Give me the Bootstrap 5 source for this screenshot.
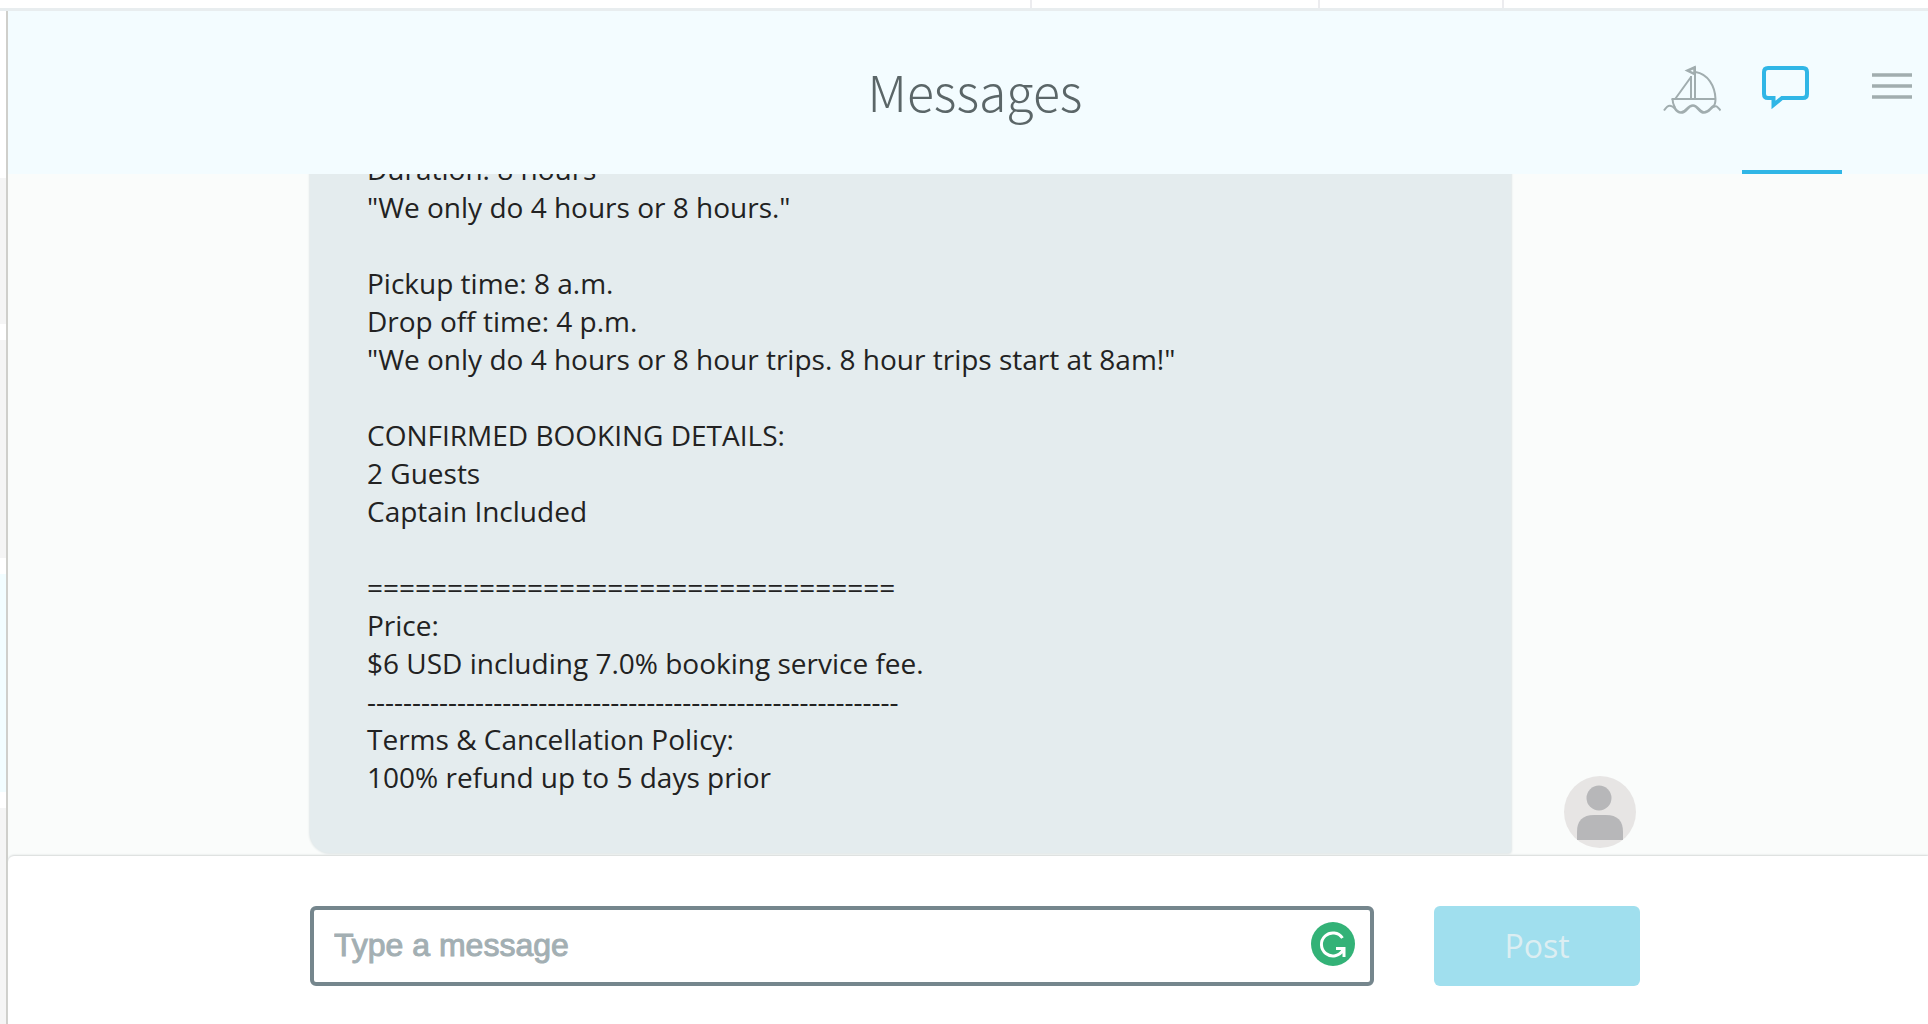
<!DOCTYPE html>
<html lang="en">
<head>
<meta charset="utf-8">
<meta name="viewport" content="width=device-width, initial-scale=1">
<title>Messages</title>
<link href="https://cdn.jsdelivr.net/npm/bootstrap@5.3.0/dist/css/bootstrap.min.css" rel="stylesheet">
<style>
  body { font-family: "Open Sans", "Noto Sans", sans-serif; color: #222; background: #fff; }

  /* strip of the page behind the panel */
  .top-strip { height: 11px; border-bottom: 3px solid #e8edef; padding-right: 424px; }
  .strip-cell { border-left: 2px solid #ececef; }
  .strip-cell.wide { width: 288px; }
  .strip-cell.mid { width: 184px; }
  .strip-cell.end { width: 2px; }

  .rail { width: 6px; padding-top: 167px; gap: 16px; }
  .rail-item { height: 218px; background: #f5f5f5; }
  .rail-item.first { height: 146px; }
  .rail-item.active { background: #f2fdff; }

  .panel { border-left: 2px solid #cfcfcb; background: #fafcfb; min-width: 0; }
  .panel-head { height: 163px; background: #f3fcff; padding-left: 14px; }
  .panel-title { font-family: "Noto Sans CJK SC", "Open Sans", sans-serif; font-weight: 300; font-size: 50px; line-height: 72px; color: #5b6668; padding-top: 43px; }
  .head-nav { right: 0; top: 0; height: 100%; }
  .head-nav a { color: #a1adaf; padding-top: 54px; }
  .head-nav svg { display: block; }
  .tab-boat { width: 100px; }
  .tab-chat { width: 100px; padding-left: 20px; border-bottom: 4px solid #30b6e6; }
  .tab-menu { width: 86px; padding-left: 30px; }

  .column-wrap { padding-left: 14px; }
  .thread-column { max-width: 1330px; width: 100%; }
  .bubble { max-width: 1201px; padding: 57px; margin-bottom: 3px; background: #e4ecee; box-shadow: 0 0 2px 1px #e0e7e8; border-radius: 20px 20px 3px 20px; font-size: 28px; line-height: 38px; white-space: pre-line; }
  .avatar { margin: 0 4px 8px 0; }

  .composer { background: #fff; box-shadow: 0 -1px 2px #d5d9d8; padding-top: 50px; padding-bottom: 38px; border-radius: 6px 0 0 0; }
  .composer-form { gap: 60px; }
  .composer .form-control { height: 80px; border: 4px solid #75868d; border-radius: 6px; padding: 0 72px 2px 20px; font-family: "Liberation Sans", sans-serif; font-size: 32px; }
  .composer .form-control::placeholder { color: #a3afb3; opacity: 1; -webkit-text-stroke: 1px #a3afb3; }
  .checker { right: 19px; top: 16px; }
  .post-btn, .post-btn:disabled { width: 206px; height: 80px; background: #a0dfee; border: 0; border-radius: 6px; color: #dceef2; opacity: 1; font-size: 32px; }
</style>
<script src="https://cdn.jsdelivr.net/npm/bootstrap@5.3.0/dist/js/bootstrap.bundle.min.js"></script>
</head>
<body>
<div class="vh-100 d-flex flex-column overflow-hidden">
  <div class="top-strip d-flex justify-content-end flex-shrink-0">
    <div class="strip-cell wide"></div>
    <div class="strip-cell mid"></div>
    <div class="strip-cell end"></div>
  </div>

  <div class="d-flex flex-grow-1 overflow-hidden">
    <div class="rail d-flex flex-column flex-shrink-0">
      <div class="rail-item first flex-shrink-0"></div>
      <div class="rail-item flex-shrink-0"></div>
      <div class="rail-item active flex-shrink-0"></div>
      <div class="rail-item flex-shrink-0"></div>
    </div>

    <main class="panel d-flex flex-column flex-grow-1">
      <header class="panel-head position-relative flex-shrink-0">
        <h1 class="panel-title text-center mb-0">Messages</h1>
        <nav class="head-nav position-absolute d-flex" aria-label="Main">
          <a href="#" class="tab-boat d-flex justify-content-center" aria-label="Boats">
            <svg width="58" height="50" viewBox="0 0 58 50" fill="none" stroke="currentColor" stroke-width="2">
              <path d="M8.500 34H53M32 1.500V34M28 11V34M28 12 12.500 33.500M32.500 7C45 9 52 21 52.500 34"/>
              <path d="M31.500 2.500 24.500 5.500 31.500 9Z" stroke-width="2.500"/>
              <path d="M9.500 34C9.500 38 10.500 40 12 43M52.500 34C52.500 38 52 40 50 42"/>
              <path d="M1 45.500C4 41 6 40 8 41C9.500 41.300 10.500 42 11 43M50 42C54 39.500 55 43 57.500 45.500"/>
              <path d="M11 42C13 45 14 47.500 18 47.500C24 47.500 24 40.500 30 40.500C35 40.500 36 47.500 41 47.500C46 47.500 47 43 51 41" stroke-width="2.700"/>
            </svg>
          </a>
          <a href="#" class="tab-chat" aria-label="Messages" aria-current="page">
            <svg width="48" height="44" viewBox="0 0 48 44" fill="none" stroke="#30b6e6" stroke-width="4">
              <path d="M6 3H41Q45 3 45 7V29Q45 33 41 33H20L11.500 40V33H6Q2 33 2 29V7Q2 3 6 3Z"/>
            </svg>
          </a>
          <a href="#" class="tab-menu" aria-label="Menu">
            <svg width="40" height="40" viewBox="0 0 40 40" stroke="currentColor" stroke-width="3.500">
              <path d="M0 10H40M0 21H40M0 32H40"/>
            </svg>
          </a>
        </nav>
      </header>

      <section class="column-wrap d-flex flex-column flex-grow-1 justify-content-end overflow-hidden" aria-label="Conversation">
        <div class="thread-column mx-auto d-flex align-items-end justify-content-between">
          <div class="bubble flex-grow-1">Duration: 8 hours
"We only do 4 hours or 8 hours."

Pickup time: 8 a.m.
Drop off time: 4 p.m.
"We only do 4 hours or 8 hour trips. 8 hour trips start at 8am!"

CONFIRMED BOOKING DETAILS:
2 Guests
Captain Included

=================================
Price:
$6 USD including 7.0% booking service fee.
-----------------------------------------------------------
Terms &amp; Cancellation Policy:
100% refund up to 5 days prior</div>
          <svg class="avatar flex-shrink-0" width="72" height="72" viewBox="0 0 72 72" role="img" aria-label="User">
            <circle cx="36" cy="36" r="36" fill="#e7e5e4"/>
            <circle cx="35" cy="22" r="12.500" fill="#b7b7b9"/>
            <path d="M13 64V56Q13 39 30 39H42Q59 39 59 56V64Z" fill="#b7b7b9"/>
          </svg>
        </div>
      </section>

      <footer class="composer column-wrap flex-shrink-0 position-relative">
        <form class="composer-form thread-column mx-auto d-flex">
          <div class="position-relative flex-grow-1">
            <label class="visually-hidden" for="message">Message</label>
            <input class="form-control" type="text" id="message" placeholder="Type a message">
            <svg class="checker position-absolute" width="44" height="44" viewBox="0 0 44 44" fill="none" stroke="#fff" stroke-width="3">
              <circle cx="22" cy="22" r="22" fill="#33b277" stroke="none"/>
              <path d="M31.500 16A11.500 11.500 0 1 0 32 28M25 26.500H33V35" />
              <path d="M28 26H34V32Z" fill="#fff" stroke="none"/>
            </svg>
          </div>
          <button class="btn post-btn flex-shrink-0" type="submit" disabled>Post</button>
        </form>
      </footer>
    </main>
  </div>
</div>
</body>
</html>
